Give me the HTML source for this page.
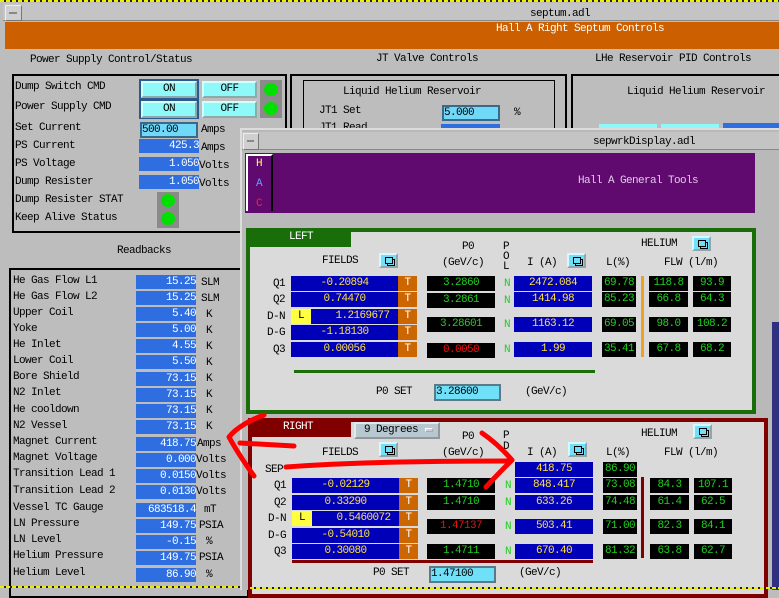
<!DOCTYPE html>
<html><head><meta charset="utf-8"><style>
*{margin:0;padding:0;box-sizing:border-box}
body{width:779px;height:590px;overflow:hidden;background:#bdbdbd;position:relative;font-family:"Liberation Mono","DejaVu Sans Mono",monospace;font-size:11px;letter-spacing:-0.6px;color:#000}
div{position:absolute;white-space:pre}
.c{text-align:center}.r{text-align:right;padding-right:1px}
.bl{background:#2e6ee0;color:#fff;height:14px;line-height:14px;width:60px;left:136px;text-align:right}
.btn{background:#8ff8f8;border:2px outset #cfffff;height:17px;line-height:13px;text-align:center}
.led{background:#8a8a8a;width:22px}
.led i{position:absolute;left:4px;width:14px;height:13px;border-radius:50%;background:#00e000}
.fb{background:#0000b8;color:#ffe040;height:15px;line-height:15px;text-align:center}
.tb{background:#cc6600;color:#fff;height:15px;line-height:15px;text-align:center;width:19px}
.kb{background:#000;color:#20d020;height:15px;line-height:15px;text-align:center}
.ib{background:#0000b8;color:#ffe040;height:15px;line-height:15px;text-align:center;width:78px}
.sq{width:19px;height:15px;background:#70e0f8;border:2px outset #d8f8ff}
.sq::after{content:"";position:absolute;left:4px;top:2px;width:6px;height:5px;border:1px solid #000;box-shadow:2px 2px 0 -1px #70e0f8,2px 2px 0 0 #000}
.lab{text-align:right;width:30px}
</style></head><body>
<!-- main window -->
<div style="left:0;top:0;width:779px;height:2px;background:repeating-linear-gradient(90deg,#ee0 0 4px,#222 4px 6px)"></div>
<div style="left:3px;top:3px;width:776px;height:18px;background:#c4c4c4;border-bottom:1px solid #888"></div>
<div style="left:5px;top:5px;width:17px;height:16px;background:#cfcfcf;border:1px solid #eee;border-right-color:#777;border-bottom-color:#777"></div>
<div style="left:9px;top:12px;width:8px;height:2px;background:#888"></div>
<div style="left:530px;top:8px">septum.adl</div>
<div style="left:5px;top:22px;width:774px;height:27px;background:#cc6000"></div>
<div style="left:496px;top:23px;color:#fff">Hall A Right Septum Controls</div>
<div style="left:30px;top:54px">Power Supply Control/Status</div>
<div style="left:376px;top:53px">JT Valve Controls</div>
<div style="left:595px;top:53px">LHe Reservoir PID Controls</div>

<div style="left:12px;top:74px;width:275px;height:159px;border:2px solid #000"></div>
<div style="left:15px;top:81px">Dump Switch CMD</div>
<div style="left:15px;top:101px">Power Supply CMD</div>
<div style="left:139px;top:79px;width:60px;height:40px;background:#2a5a90"></div>
<div class="btn" style="left:141px;top:81px;width:56px">ON</div>
<div class="btn" style="left:202px;top:81px;width:55px">OFF</div>
<div class="btn" style="left:141px;top:101px;width:56px">ON</div>
<div class="btn" style="left:202px;top:101px;width:55px">OFF</div>
<div class="led" style="left:260px;top:80px;height:38px"><i style="top:3px"></i><i style="top:22px"></i></div>
<div style="left:15px;top:122px">Set Current</div>
<div style="left:140px;top:122px;width:58px;height:16px;background:#70d8f8;border:2px solid #3a6a8a;line-height:12px">500.00</div>
<div style="left:201px;top:124px">Amps</div>
<div style="left:15px;top:140px">PS Current</div><div class="bl" style="left:139px;top:139px">425.3</div><div style="left:201px;top:142px">Amps</div>
<div style="left:15px;top:158px">PS Voltage</div><div class="bl" style="left:139px;top:157px">1.050</div><div style="left:199px;top:160px">Volts</div>
<div style="left:15px;top:176px">Dump Resister</div><div class="bl" style="left:139px;top:175px">1.050</div><div style="left:199px;top:178px">Volts</div>
<div style="left:15px;top:194px">Dump Resister STAT</div>
<div style="left:15px;top:212px">Keep Alive Status</div>
<div class="led" style="left:157px;top:192px;height:36px"><i style="top:2px"></i><i style="top:20px"></i></div>
<div style="left:117px;top:245px">Readbacks</div>

<div style="left:9px;top:268px;width:240px;height:330px;border:2px solid #000"></div>
<div style="left:13px;top:275px">He Gas Flow L1</div><div class="bl" style="top:275px">15.25</div><div style="left:201px;top:277px">SLM</div>
<div style="left:13px;top:291px">He Gas Flow L2</div><div class="bl" style="top:291px">15.25</div><div style="left:201px;top:293px">SLM</div>
<div style="left:13px;top:307px">Upper Coil</div><div class="bl" style="top:307px">5.40</div><div style="left:206px;top:309px">K</div>
<div style="left:13px;top:323px">Yoke</div><div class="bl" style="top:323px">5.00</div><div style="left:206px;top:325px">K</div>
<div style="left:13px;top:339px">He Inlet</div><div class="bl" style="top:339px">4.55</div><div style="left:206px;top:341px">K</div>
<div style="left:13px;top:355px">Lower Coil</div><div class="bl" style="top:355px">5.50</div><div style="left:206px;top:357px">K</div>
<div style="left:13px;top:371px">Bore Shield</div><div class="bl" style="top:372px">73.15</div><div style="left:206px;top:373px">K</div>
<div style="left:13px;top:387px">N2 Inlet</div><div class="bl" style="top:388px">73.15</div><div style="left:206px;top:389px">K</div>
<div style="left:13px;top:404px">He cooldown</div><div class="bl" style="top:404px">73.15</div><div style="left:206px;top:405px">K</div>
<div style="left:13px;top:420px">N2 Vessel</div><div class="bl" style="top:420px">73.15</div><div style="left:206px;top:421px">K</div>
<div style="left:13px;top:436px">Magnet Current</div><div class="bl" style="top:437px">418.75</div><div style="left:197px;top:438px">Amps</div>
<div style="left:13px;top:452px">Magnet Voltage</div><div class="bl" style="top:453px">0.000</div><div style="left:196px;top:454px">Volts</div>
<div style="left:13px;top:468px">Transition Lead 1</div><div class="bl" style="top:469px">0.0150</div><div style="left:196px;top:470px">Volts</div>
<div style="left:13px;top:485px">Transition Lead 2</div><div class="bl" style="top:485px">0.0130</div><div style="left:196px;top:486px">Volts</div>
<div style="left:13px;top:502px">Vessel TC Gauge</div><div class="bl" style="top:503px">683518.4</div><div style="left:204px;top:504px">mT</div>
<div style="left:13px;top:518px">LN Pressure</div><div class="bl" style="top:519px">149.75</div><div style="left:199px;top:520px">PSIA</div>
<div style="left:13px;top:534px">LN Level</div><div class="bl" style="top:535px">-0.15</div><div style="left:206px;top:536px">%</div>
<div style="left:13px;top:550px">Helium Pressure</div><div class="bl" style="top:551px">149.75</div><div style="left:199px;top:552px">PSIA</div>
<div style="left:13px;top:567px">Helium Level</div><div class="bl" style="top:568px">86.90</div><div style="left:206px;top:569px">%</div>
<div style="left:0;top:586px;width:250px;height:2px;background:repeating-linear-gradient(90deg,#ee0 0 4px,#222 4px 6px)"></div>

<div style="left:290px;top:74px;width:277px;height:60px;border:2px solid #000;border-bottom:none"></div>
<div style="left:303px;top:80px;width:252px;height:60px;border:1px solid #000;border-bottom:none"></div>
<div style="left:343px;top:86px">Liquid Helium Reservoir</div>
<div style="left:319px;top:105px">JT1 Set</div>
<div style="left:442px;top:105px;width:58px;height:16px;background:#70d8f8;border:2px solid #3a6a8a;line-height:12px">5.000</div>
<div style="left:514px;top:107px">%</div>
<div style="left:319px;top:122px">JT1 Read</div>
<div style="left:441px;top:124px;width:59px;height:6px;background:#2e6ee0"></div>
<div style="left:571px;top:74px;width:210px;height:60px;border:2px solid #000;border-right:none;border-bottom:none"></div>
<div style="left:627px;top:86px">Liquid Helium Reservoir</div>
<div style="left:599px;top:124px;width:58px;height:6px;background:#8ff8f8"></div>
<div style="left:661px;top:124px;width:58px;height:6px;background:#8ff8f8"></div>
<div style="left:723px;top:123px;width:56px;height:7px;background:#2e6ee0"></div>

<!-- second window -->
<div style="left:240px;top:128px;width:539px;height:462px;background:#b9b9b9;border-left:2px solid #ddd;border-top:2px solid #ddd"></div>
<div style="left:242px;top:132px;width:537px;height:18px;background:#c4c4c4;border-bottom:1px solid #888"></div>
<div style="left:243px;top:133px;width:16px;height:17px;background:#cfcfcf;border:1px solid #eee;border-right-color:#777;border-bottom-color:#777"></div>
<div style="left:247px;top:140px;width:7px;height:2px;background:#888"></div>
<div style="left:593px;top:136px">sepwrkDisplay.adl</div>
<div style="left:245px;top:153px;width:510px;height:60px;background:#600a70"></div>
<div style="left:246px;top:154px;width:27px;height:57px;border-left:2px solid #fff;border-top:2px solid #fff;border-right:2px solid #000"></div>
<div style="left:256px;top:158px;color:#ffff60">H</div>
<div style="left:256px;top:178px;color:#60a0ff">A</div>
<div style="left:256px;top:198px;color:#ff2020">C</div>
<div style="left:578px;top:175px;color:#e0c8e8">Hall A General Tools</div>
<div style="left:772px;top:322px;width:7px;height:268px;background:#303080"></div>

<!-- LEFT panel -->
<div style="left:246px;top:228px;width:510px;height:186px;background:#dadada;border:4px solid #1a6e0a"></div>
<div style="left:246px;top:229px;width:105px;height:18px;background:#1a6e0a;color:#fff;padding-left:43px;line-height:16px">LEFT</div>
<div style="left:322px;top:255px">FIELDS</div><div class="sq" style="left:379px;top:253px"></div>
<div style="left:462px;top:241px">P0</div><div style="left:442px;top:257px">(GeV/c)</div>
<div style="left:503px;top:242px;line-height:10px">P<br>O<br>L</div>
<div style="left:527px;top:257px">I (A)</div><div class="sq" style="left:567px;top:253px"></div>
<div style="left:641px;top:238px">HELIUM</div><div class="sq" style="left:692px;top:236px"></div>
<div style="left:606px;top:257px">L(%)</div><div style="left:664px;top:257px">FLW (l/m)</div>
<div class="lab" style="left:255px;top:278px">Q1</div>
<div class="lab" style="left:255px;top:294px">Q2</div>
<div class="lab" style="left:255px;top:311px">D-N</div>
<div class="lab" style="left:255px;top:327px">D-G</div>
<div class="lab" style="left:255px;top:344px">Q3</div>
<div class="fb" style="left:291px;top:276px;width:107px">-0.20894</div><div class="tb" style="left:398px;top:276px">T</div>
<div class="fb" style="left:291px;top:292px;width:107px">0.74470</div><div class="tb" style="left:398px;top:292px">T</div>
<div class="fb" style="left:291px;top:309px;width:107px">      1.2169677</div><div style="left:291px;top:309px;width:20px;height:15px;background:#ffff40;text-align:center;line-height:15px">L</div><div class="tb" style="left:398px;top:309px">T</div>
<div class="fb" style="left:291px;top:325px;width:107px">-1.18130</div><div class="tb" style="left:398px;top:325px">T</div>
<div class="fb" style="left:291px;top:342px;width:107px">0.00056</div><div class="tb" style="left:398px;top:342px">T</div>
<div class="kb" style="left:427px;top:276px;width:68px">3.2860</div>
<div class="kb" style="left:427px;top:293px;width:68px">3.2861</div>
<div class="kb" style="left:427px;top:317px;width:68px">3.28601</div>
<div class="kb" style="left:427px;top:343px;width:68px;color:#f01010">0.0050</div>
<div style="left:504px;top:278px;color:#20d020">N</div><div style="left:504px;top:295px;color:#20d020">N</div><div style="left:504px;top:319px;color:#20d020">N</div><div style="left:504px;top:344px;color:#20d020">N</div>
<div class="ib" style="left:514px;top:276px">2472.084</div>
<div class="ib" style="left:514px;top:292px">1414.98</div>
<div class="ib" style="left:514px;top:317px">1163.12</div>
<div class="ib" style="left:514px;top:342px">1.99</div>
<div class="kb" style="left:602px;top:276px;width:34px">69.78</div>
<div class="kb" style="left:602px;top:292px;width:34px">85.23</div>
<div class="kb" style="left:602px;top:317px;width:34px">69.05</div>
<div class="kb" style="left:602px;top:342px;width:34px">35.41</div>
<div style="left:641px;top:276px;width:3px;height:81px;background:#f0a020"></div>
<div class="kb" style="left:649px;top:276px;width:39px">118.8</div><div class="kb" style="left:693px;top:276px;width:38px">93.9</div>
<div class="kb" style="left:649px;top:292px;width:39px">66.8</div><div class="kb" style="left:693px;top:292px;width:38px">64.3</div>
<div class="kb" style="left:649px;top:317px;width:39px">98.0</div><div class="kb" style="left:693px;top:317px;width:38px">108.2</div>
<div class="kb" style="left:649px;top:342px;width:39px">67.8</div><div class="kb" style="left:693px;top:342px;width:38px">68.2</div>
<div style="left:294px;top:370px;width:301px;height:3px;background:#1a6e0a"></div>
<div style="left:376px;top:386px">P0 SET</div>
<div style="left:434px;top:384px;width:67px;height:17px;background:#70e0f8;border:2px solid #5a7a8a;line-height:13px">3.28600</div>
<div style="left:525px;top:386px">(GeV/c)</div>

<!-- RIGHT panel -->
<div style="left:248px;top:418px;width:520px;height:180px;background:#dadada;border:4px solid #800000"></div>
<div style="left:248px;top:418px;width:103px;height:19px;background:#800000;color:#fff;padding-left:35px;line-height:18px">RIGHT</div>
<div style="left:354px;top:422px;width:86px;height:17px;background:#b8c8d0;border:2px outset #e0e8f0;line-height:13px;padding-left:8px">9 Degrees</div>
<div style="left:425px;top:428px;width:8px;height:4px;background:#ccd;border:1px outset #fff"></div>
<div style="left:462px;top:431px">P0</div><div style="left:442px;top:447px">(GeV/c)</div>
<div style="left:503px;top:431px;line-height:11px">P<br>D</div>
<div style="left:322px;top:447px">FIELDS</div><div class="sq" style="left:379px;top:442px"></div>
<div style="left:527px;top:447px">I (A)</div><div class="sq" style="left:568px;top:442px"></div>
<div style="left:641px;top:428px">HELIUM</div><div class="sq" style="left:693px;top:424px"></div>
<div style="left:606px;top:447px">L(%)</div><div style="left:664px;top:447px">FLW (l/m)</div>
<div style="left:265px;top:464px">SEP</div>
<div class="ib" style="left:515px;top:462px">418.75</div>
<div class="kb" style="left:603px;top:462px;width:34px">86.90</div>
<div class="lab" style="left:256px;top:480px">Q1</div>
<div class="lab" style="left:256px;top:497px">Q2</div>
<div class="lab" style="left:256px;top:513px">D-N</div>
<div class="lab" style="left:256px;top:530px">D-G</div>
<div class="lab" style="left:256px;top:546px">Q3</div>
<div class="fb" style="left:292px;top:478px;width:107px">-0.02129</div><div class="tb" style="left:399px;top:478px">T</div>
<div class="fb" style="left:292px;top:495px;width:107px">0.33290</div><div class="tb" style="left:399px;top:495px">T</div>
<div class="fb" style="left:292px;top:511px;width:107px">      0.5460072</div><div style="left:292px;top:511px;width:20px;height:15px;background:#ffff40;text-align:center;line-height:15px">L</div><div class="tb" style="left:399px;top:511px">T</div>
<div class="fb" style="left:292px;top:528px;width:107px">-0.54010</div><div class="tb" style="left:399px;top:528px">T</div>
<div class="fb" style="left:292px;top:544px;width:107px">0.30080</div><div class="tb" style="left:399px;top:544px">T</div>
<div class="kb" style="left:427px;top:478px;width:68px">1.4710</div>
<div class="kb" style="left:427px;top:495px;width:68px">1.4710</div>
<div class="kb" style="left:427px;top:519px;width:68px;color:#f01010">1.47137</div>
<div class="kb" style="left:427px;top:544px;width:68px">1.4711</div>
<div style="left:505px;top:480px;color:#20d020">N</div><div style="left:505px;top:497px;color:#20d020">N</div><div style="left:505px;top:521px;color:#20d020">N</div><div style="left:505px;top:546px;color:#20d020">N</div>
<div class="ib" style="left:515px;top:478px">848.417</div>
<div class="ib" style="left:515px;top:495px">633.26</div>
<div class="ib" style="left:515px;top:519px">503.41</div>
<div class="ib" style="left:515px;top:544px">670.40</div>
<div class="kb" style="left:603px;top:478px;width:34px">73.08</div>
<div class="kb" style="left:603px;top:495px;width:34px">74.48</div>
<div class="kb" style="left:603px;top:519px;width:34px">71.00</div>
<div class="kb" style="left:603px;top:544px;width:34px">81.32</div>
<div style="left:641px;top:477px;width:3px;height:81px;background:#800000"></div>
<div class="kb" style="left:650px;top:478px;width:39px">84.3</div><div class="kb" style="left:694px;top:478px;width:38px">107.1</div>
<div class="kb" style="left:650px;top:495px;width:39px">61.4</div><div class="kb" style="left:694px;top:495px;width:38px">62.5</div>
<div class="kb" style="left:650px;top:519px;width:39px">82.3</div><div class="kb" style="left:694px;top:519px;width:38px">84.1</div>
<div class="kb" style="left:650px;top:544px;width:39px">63.8</div><div class="kb" style="left:694px;top:544px;width:38px">62.7</div>
<div style="left:292px;top:560px;width:301px;height:3px;background:#800000"></div>
<div style="left:373px;top:567px">P0 SET</div>
<div style="left:429px;top:566px;width:67px;height:17px;background:#70e0f8;border:2px solid #5a7a8a;line-height:13px">1.47100</div>
<div style="left:519px;top:567px">(GeV/c)</div>
<div style="left:250px;top:587px;width:529px;height:2px;background:repeating-linear-gradient(90deg,#ee0 0 4px,#222 4px 6px)"></div>

<svg style="position:absolute;left:0;top:0" width="779" height="590">
<g fill="none" stroke="#f00" stroke-width="5" stroke-linecap="round" stroke-linejoin="round">
<path d="M264 415 C250 420 236 428 229 437 C236 450 244 462 254 476"/>
<path d="M240 443 L294 446"/>
<path d="M286 467 C350 462 430 461 510 461"/>
<path d="M482 433 C495 442 505 452 512 460 C502 470 494 478 486 487"/>
</g></svg>
</body></html>
